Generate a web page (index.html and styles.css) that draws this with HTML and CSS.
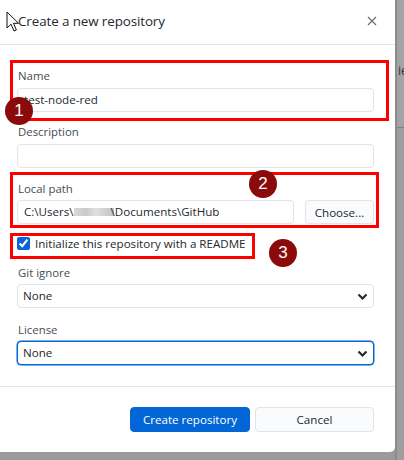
FILE: index.html
```html
<!DOCTYPE html>
<html>
<head>
<meta charset="utf-8">
<link rel="stylesheet" href="styles.css">
</head>
<body>
<div class="screen">
  <div class="dialog">
    <div class="header">
      <span class="title">Create a new repository</span>
      <svg class="close" width="10" height="10" viewBox="0 0 10 10"><path d="M1 1L9 9M9 1L1 9" stroke="#6a737d" stroke-width="1.3" fill="none"/></svg>
      <svg class="cursor" width="14" height="21" viewBox="0 0 14 21"><path d="M1 1V17L5 13.2L8 20L10.4 19L7.5 12.3H12.6Z" fill="#fff" stroke="#111" stroke-width="1"/></svg>
    </div>
    <div class="body">
      <div class="field f-name">
        <label class="lbl">Name</label>
        <div class="input">test-node-red</div>
      </div>
      <div class="field f-desc">
        <label class="lbl">Description</label>
        <div class="input"></div>
      </div>
      <div class="field f-path">
        <label class="lbl">Local path</label>
        <div class="path-row">
          <div class="input grow">C:\Users\<span class="blur"></span>\Documents\GitHub</div>
          <button class="btn choose">Choose...</button>
        </div>
      </div>
      <div class="check-row">
        <input type="checkbox" checked class="cb">
        <span>Initialize this repository with a README</span>
      </div>
      <div class="field f-git">
        <label class="lbl">Git ignore</label>
        <div class="select">None
          <svg class="chev" width="11" height="8" viewBox="0 0 11 8"><path d="M1.5 1.5L5.5 5.5L9.5 1.5" stroke="#24292e" stroke-width="2.2" fill="none"/></svg>
        </div>
      </div>
      <div class="field f-lic">
        <label class="lbl">License</label>
        <div class="select focus">None
          <svg class="chev" width="11" height="8" viewBox="0 0 11 8"><path d="M1.5 1.5L5.5 5.5L9.5 1.5" stroke="#24292e" stroke-width="2.2" fill="none"/></svg>
        </div>
      </div>
    </div>
    <div class="footer">
      <button class="btn primary">Create repository</button>
      <button class="btn cancel">Cancel</button>
    </div>

    <div class="mark box1"></div>
    <div class="mark box2"></div>
    <div class="mark box3"></div>
    <div class="badge b1">1</div>
    <div class="badge b2">2</div>
    <div class="badge b3">3</div>
  </div>
  <div class="behind">
    <div class="behind-top"><span class="behind-text">ie</span></div>
    <div class="behind-rest"></div>
  </div>
</div>
</body>
</html>
```
FILE: styles.css
```css
* { box-sizing: border-box; }
html, body { margin: 0; padding: 0; }
body {
  width: 404px;
  height: 460px;
  overflow: hidden;
  background: #9b9b9b;
  font-family: "Open Sans", "Noto Sans", sans-serif;
  color: #24292e;
}
.screen {
  display: flex;
  height: 460px;
}
.dialog {
  position: relative;
  width: 395px;
  height: 452px;
  background: #fff;
  border-bottom-right-radius: 5px;
  display: flex;
  flex-direction: column;
}
.header {
  position: relative;
  height: 45px;
  border-bottom: 1px solid #e1e4e8;
  display: flex;
  align-items: center;
  padding: 0 18px 2px 18px;
  justify-content: space-between;
}
.title {
  font-size: 13.4px;
  letter-spacing: -0.1px;
  color: #24292e;
}
.cursor {
  position: absolute;
  left: 6px;
  top: 11px;
}
.body {
  flex: 0 0 auto;
  padding: 22px 21px 21px 17px;
  border-bottom: 1px solid #e1e4e8;
}
.lbl {
  display: block;
  font-size: 11.4px;
  line-height: 16px;
  padding-top: 1px;
  color: #444d56;
  margin-left: 1px;
}
.input, .select {
  height: 24px;
  border: 1px solid #e1e4e8;
  border-radius: 4px;
  font-size: 11.6px;
  line-height: 22px;
  padding: 0 6px;
  color: #24292e;
  background: #fff;
  white-space: nowrap;
  overflow: hidden;
}
.f-name .input { margin-top: 4px; }
.f-desc { margin-top: 11px; }
.f-desc .input { margin-top: 4px; }
.f-path { margin-top: 12px; }
.path-row {
  margin-top: 3px;
  display: flex;
  gap: 11px;
}
.grow { flex: 1; }
.blur {
  display: inline-block;
  width: 40px;
  height: 8px;
  vertical-align: middle;
  margin: 0 -3px 2px 0;
  background: linear-gradient(90deg, #d8d8d8, #c9c9c9 30%, #e0e0e0 55%, #cfcfcf 80%, #c4c4c4);
}
.btn {
  font-family: inherit;
  font-size: 11.6px;
  height: 25px;
  border-radius: 4px;
  border: 1px solid #e1e4e8;
  background: #fafbfc;
  color: #24292e;
  padding: 0;
  cursor: pointer;
}
.choose {
  width: 69px;
  height: 24px;
}
.check-row {
  margin-top: 12px;
  display: flex;
  align-items: center;
  gap: 5px;
  font-size: 11.6px;
  height: 14px;
  color: #24292e;
}
.cb {
  margin: 0;
  width: 13px;
  height: 13px;
  accent-color: #0b63d8;
}
.f-git { margin-top: 14px; }
.f-git .select { margin-top: 3px; }
.f-lic { margin-top: 13px; }
.f-lic .select { margin-top: 3px; }
.select {
  position: relative;
  padding-left: 5px;
}
.select.focus {
  border: 1px solid #0366d6;
  box-shadow: 0 0 0 0.5px #0366d6;
}
.chev {
  position: absolute;
  right: 5px;
  top: 8px;
}
.footer {
  display: flex;
  justify-content: flex-end;
  gap: 5px;
  padding: 20px 21px 0 0;
}
.primary {
  width: 120px;
  background: #0366d6;
  border-color: #0366d6;
  color: #fff;
}
.cancel {
  width: 119px;
}
.mark {
  position: absolute;
  border: 3px solid #ff0000;
}
.box1 { left: 10px; top: 60px; width: 379px; height: 61px; }
.box2 { left: 10px; top: 172px; width: 369px; height: 56px; }
.box3 { left: 10px; top: 233px; width: 245px; height: 26px; }
.badge {
  position: absolute;
  width: 28px;
  height: 28px;
  border-radius: 50%;
  background: #8b0a0a;
  color: #fff;
  font-family: "Liberation Sans", Arial, sans-serif;
  font-size: 17px;
  line-height: 28px;
  text-align: center;
}
.b1 { left: 5px; top: 97px; }
.b2 { left: 249px; top: 170px; }
.b3 { left: 269px; top: 239px; }
.behind {
  width: 9px;
  display: flex;
  flex-direction: column;
  border-left: 2px solid #8c8c8c;
}
.behind-top {
  height: 128px;
  background: #a3a3a3;
  border-bottom: 1px solid #7f7f7f;
  overflow: hidden;
}
.behind-text {
  display: block;
  margin-top: 62px;
  margin-left: 1px;
  font-size: 12px;
  color: #333;
}
.behind-rest {
  flex: 1;
  background: #9e9e9e;
}
```
